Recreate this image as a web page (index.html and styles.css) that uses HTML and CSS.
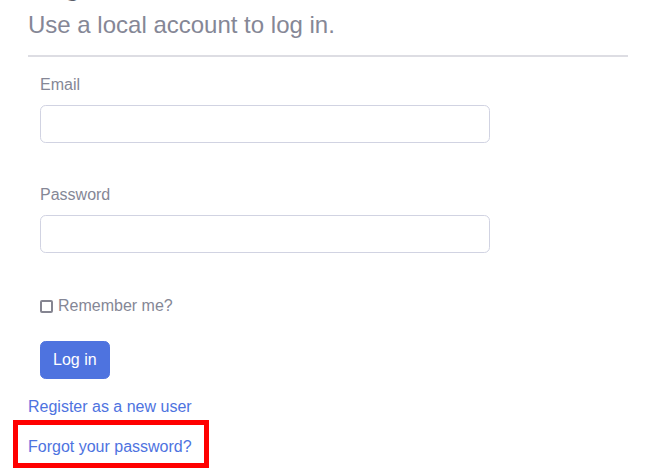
FILE: index.html
```html
<!DOCTYPE html>
<html lang="en">
<head>
<meta charset="utf-8">
<title>Log in</title>
<link rel="stylesheet" href="styles.css">
</head>
<body>
<main class="page">
  <h1 class="page-title">Log in</h1>
  <section class="login">
    <h2 class="subtitle">Use a local account to log in.</h2>
    <hr class="divider">
    <form class="login-form">
      <div class="field">
        <label class="field-label" for="email">Email</label>
        <input class="field-input" id="email" type="email">
      </div>
      <div class="field">
        <label class="field-label" for="password">Password</label>
        <input class="field-input" id="password" type="password">
      </div>
      <div class="check">
        <input class="check-box" id="remember" type="checkbox">
        <label class="check-label" for="remember">Remember me?</label>
      </div>
      <button class="btn-primary" type="button">Log in</button>
    </form>
    <div class="links">
      <p class="link-row"><a class="link" href="#">Register as a new user</a></p>
      <p class="link-row highlighted"><a class="link" href="#">Forgot your password?</a><span class="highlight"></span></p>
    </div>
  </section>
</main>
</body>
</html>
```
FILE: styles.css
```css
html, body {
  margin: 0;
  padding: 0;
  background: #ffffff;
}
body {
  font-family: "Liberation Sans", Arial, sans-serif;
  font-size: 16px;
  line-height: 24px;
  color: #858796;
  overflow: hidden;
}
.page {
  width: 600px;
  margin-left: 28px;
}
.page-title {
  margin: -36px 0 8px 0;
  font-size: 32px;
  line-height: 38px;
  font-weight: 400;
  color: #5a5c69;
}
.subtitle {
  margin: 0 0 8px 0;
  font-size: 24px;
  line-height: 29px;
  font-weight: 400;
  color: #858796;
}
.divider {
  margin: 16px 0 16px 0;
  border: 0;
  height: 2px;
  background: #dddde3;
}
.login-form {
  padding-left: 12px;
  display: flex;
  flex-direction: column;
  align-items: flex-start;
}
.field {
  display: flex;
  flex-direction: column;
  margin-bottom: 40px;
}
.field-label {
  margin-bottom: 8px;
}
.field-input {
  box-sizing: border-box;
  width: 450px;
  height: 38px;
  margin: 0;
  border: 1px solid #d1d3e2;
  border-radius: 5.6px;
  background: #fff;
  font: inherit;
  padding: 6px 12px;
}
.check {
  display: flex;
  align-items: center;
  height: 24px;
  margin-top: 1px;
  margin-bottom: 23px;
}
.check-box {
  -webkit-appearance: none;
  appearance: none;
  box-sizing: border-box;
  width: 13px;
  height: 13px;
  margin: 1px 5px 0 0;
  border: 2px solid #858591;
  border-radius: 2px;
  background: #fff;
}
.btn-primary {
  box-sizing: border-box;
  height: 38px;
  padding: 6px 12px;
  border: 1px solid #4e73df;
  border-radius: 5.6px;
  background: #4e73df;
  color: #ffffff;
  font: inherit;
  line-height: 24px;
  margin-bottom: 16px;
}
.link-row {
  margin: 0 0 16px 0;
}
.link {
  color: #4e73df;
  text-decoration: none;
}
.highlighted {
  position: relative;
}
.highlight {
  position: absolute;
  left: -15px;
  top: -15px;
  width: 196px;
  height: 48px;
  box-sizing: border-box;
  border: 5px solid #ff0000;
  pointer-events: none;
}
```
